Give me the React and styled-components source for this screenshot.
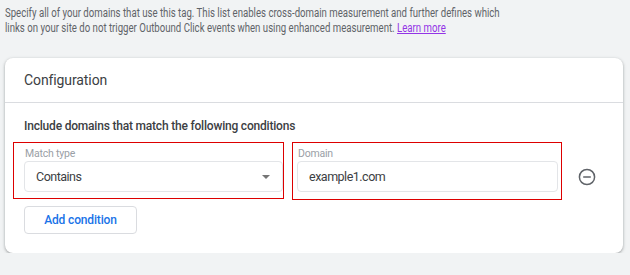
import React from "react";
import styled, { createGlobalStyle } from "styled-components";

const GlobalStyle = createGlobalStyle`
  body {
    margin: 0;
    background: #f1f3f4;
    font-family: Roboto, "Liberation Sans", Arial, sans-serif;
    overflow-x: hidden;
  }
`;

const Page = styled.div`
  padding: 5px 7px 0 5px;
`;

/* the intro copy is set in a condensed cut; squeeze Roboto to match */
const IntroWrap = styled.div`
  overflow: hidden;
  margin-bottom: 23px;
`;

const Intro = styled.p`
  margin: 0;
  width: 655px;
  font-size: 12.5px;
  line-height: 15px;
  color: #5f6368;
  transform: scaleX(0.77);
  transform-origin: left top;
  a {
    color: #9334e6;
    text-decoration: underline;
  }
`;

const Card = styled.div`
  background: #fff;
  border-radius: 8px;
  box-shadow: 0 1px 2px rgba(60, 64, 67, 0.3), 0 1px 3px 1px rgba(60, 64, 67, 0.15);
`;

const CardHeader = styled.div`
  height: 44px;
  display: flex;
  align-items: center;
  padding: 0 19px;
  font-size: 14px;
  letter-spacing: -0.1px;
  color: #3c4043;
  border-bottom: 1px solid #dadce0;
`;

const CardBody = styled.div`
  padding: 16px 19px 19px 8px;
`;

const Title = styled.div`
  padding-left: 11px;
  font-size: 12px;
  letter-spacing: -0.2px;
  font-weight: 500;
  color: #3c4043;
  margin-bottom: 9px;
`;

const Row = styled.div`
  display: flex;
  align-items: flex-start;
  gap: 8px;
`;

const FieldBox = styled.div`
  width: ${(p) => p.$width}px;
  box-sizing: border-box;
  border: 1px solid #d00;
  padding: 4px ${(p) => p.$right}px ${(p) => p.$bottom}px ${(p) => p.$left}px;
`;

const Label = styled.div`
  font-size: 10.5px;
  letter-spacing: -0.2px;
  line-height: 13px;
  color: #9aa0a6;
  margin-bottom: 1px;
  padding-left: 1px;
`;

const Control = styled.div`
  height: 31px;
  box-sizing: border-box;
  border: 1px solid #e3e5e8;
  border-radius: 4px;
  display: flex;
  align-items: center;
  justify-content: space-between;
  padding: 0 11px;
  font-size: 12.5px;
  letter-spacing: -0.5px;
  color: #3c4043;
`;

const Caret = styled.span`
  width: 0;
  height: 0;
  border-left: 4px solid transparent;
  border-right: 4px solid transparent;
  border-top: 4px solid #757575;
  margin-right: 1px;
`;

const RemoveButton = styled.button`
  border: none;
  background: none;
  padding: 0;
  margin: 26px 0 0 8px;
  width: 18px;
  height: 18px;
  display: flex;
  color: #5f6368;
  cursor: pointer;
`;

const AddButton = styled.button`
  margin: 6px 0 0 11px;
  width: 113px;
  height: 28px;
  border: 1px solid #dadce0;
  border-radius: 4px;
  background: #fff;
  color: #1a73e8;
  font-family: inherit;
  font-size: 12px;
  letter-spacing: -0.15px;
  font-weight: 500;
  cursor: pointer;
`;

const MinusCircle = () => (
  <svg width="18" height="18" viewBox="0 0 18 18" fill="none">
    <circle cx="9" cy="9" r="7.6" stroke="currentColor" strokeWidth="1.5" />
    <line x1="5.2" y1="9" x2="12.8" y2="9" stroke="currentColor" strokeWidth="1.5" />
  </svg>
);

export default function App() {
  return (
    <Page>
      <GlobalStyle />
      <IntroWrap>
        <Intro>
          Specify all of your domains that use this tag. This list enables cross-domain measurement and further defines which
          links on your site do not trigger Outbound Click events when using enhanced measurement.{" "}
          <a href="#">Learn more</a>
        </Intro>
      </IntroWrap>
      <Card>
        <CardHeader>Configuration</CardHeader>
        <CardBody>
          <Title>Include domains that match the following conditions</Title>
          <Row>
            <FieldBox $width={271} $left={10} $right={0} $bottom={6}>
              <Label>Match type</Label>
              <Control>
                Contains
                <Caret />
              </Control>
            </FieldBox>
            <FieldBox $width={270} $left={4} $right={3} $bottom={7}>
              <Label>Domain</Label>
              <Control>example1.com</Control>
            </FieldBox>
            <RemoveButton aria-label="Remove condition">
              <MinusCircle />
            </RemoveButton>
          </Row>
          <AddButton>Add condition</AddButton>
        </CardBody>
      </Card>
    </Page>
  );
}
